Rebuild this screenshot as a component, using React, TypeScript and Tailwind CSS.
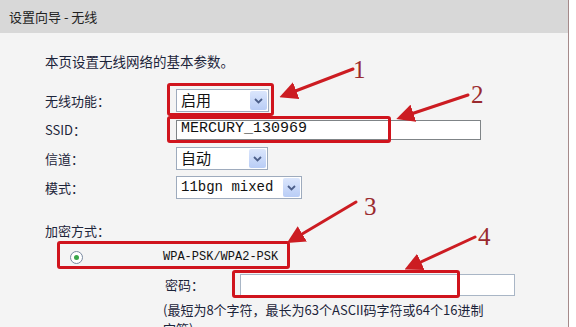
import React from "react";

const cjk = { fontFamily: '"Noto Sans CJK SC", "Liberation Sans", sans-serif' };
const mono = { fontFamily: '"Liberation Mono", "DejaVu Sans Mono", monospace' };

function Select({ value, width, isMono }: { value: string; width: string; isMono?: boolean }) {
  return (
    <div className={`flex h-[23px] ${width} items-stretch border border-[#9eabbd] bg-white`}>
      <span
        className={`flex flex-1 items-center pl-[4px] text-[#111] ${isMono ? "text-[14px]" : "text-[15px]"}`}
        style={isMono ? mono : cjk}
      >
        {value}
      </span>
      <span className="m-[1px] flex w-[17px] items-center justify-center rounded-[2px] bg-gradient-to-b from-[#dbe6fc] to-[#b9cdf6]">
        <svg width="9" height="6" viewBox="0 0 9 6">
          <path d="M1 1 L4.5 4.5 L8 1" fill="none" stroke="#4c5f8a" strokeWidth="1.8" />
        </svg>
      </span>
    </div>
  );
}

function Row({ label, children }: { label: string; children: React.ReactNode }) {
  return (
    <div className="flex h-[29px] items-center">
      <span className="w-[131px] text-[13px] text-[#1c243a]">{label}</span>
      {children}
    </div>
  );
}

export default function App() {
  const arrows = [
    { x1: 353, y1: 69, x2: 285, y2: 95 },
    { x1: 468, y1: 95, x2: 402, y2: 117 },
    { x1: 356, y1: 202, x2: 292, y2: 240 },
    { x1: 475, y1: 237, x2: 410, y2: 267 },
  ];
  return (
    <div className="relative h-[327px] w-[576px] overflow-hidden bg-white" style={cjk}>
      <div className="h-[327px] w-[569px] border-r border-[#a58a8a] bg-[#f4f4f4]">
        {/* header */}
        <div className="flex h-[33px] items-center bg-[#d8d8d8] pl-[9px] text-[13px] text-[#222]">
          设置向导 - 无线
        </div>

        <div className="pl-[45px]">
          <p className="mt-[18px] h-[20px] text-[13.5px] leading-[20px] text-[#1c243a]">本页设置无线网络的基本参数。</p>

          <div className="mt-[15px]">
            <Row label="无线功能：">
              <Select value="启用" width="w-[93px]" />
            </Row>
            <Row label="SSID：">
              <div className="flex h-[20px] w-[305px] items-center border border-[#7f8487] bg-white pl-[4px] text-[15px] text-[#111]" style={mono}>
                MERCURY_130969
              </div>
            </Row>
            <Row label="信道：">
              <Select value="自动" width="w-[92px]" />
            </Row>
            <Row label="模式：">
              <Select value="11bgn mixed" width="w-[126px]" isMono />
            </Row>
          </div>

          <p className="mt-[19px] h-[20px] text-[13px] leading-[20px] text-[#1c243a]">加密方式：</p>
        </div>

        {/* radio row */}
        <div className="mt-[3px] flex h-[26px] items-center pl-[70px]">
          <span className="flex h-[13px] w-[13px] items-center justify-center rounded-full border border-[#7a8aa0] bg-white">
            <span className="h-[5px] w-[5px] rounded-full bg-[#3aa64a]" />
          </span>
          <span className="ml-[80px] text-[12px] text-[#111]" style={mono}>
            WPA-PSK/WPA2-PSK
          </span>
        </div>

        {/* password */}
        <div className="mt-[4px] flex h-[22px] items-center pl-[165px]">
          <span className="w-[75px] text-[13px] text-[#1c243a]">密码：</span>
          <div className="h-[22px] w-[275px] border border-[#a9b6c6] bg-white" />
        </div>

        <div className="mt-[4px] pl-[163px] text-[13px] leading-[19px] text-[#1c243a]">
          <p>(最短为8个字符，最长为63个ASCII码字符或64个16进制</p>
          <p>字符)</p>
        </div>
      </div>

      {/* red highlight boxes */}
      <div className="absolute left-[167px] top-[83px] h-[33px] w-[107px] rounded-[3px] border-[3px] border-[#d0141d]" />
      <div className="absolute left-[167px] top-[116px] h-[27px] w-[224px] rounded-[3px] border-[3px] border-[#d0141d]" />
      <div className="absolute left-[57px] top-[241px] h-[28px] w-[233px] rounded-[3px] border-[3px] border-[#d0141d]" />
      <div className="absolute left-[232px] top-[270px] h-[28px] w-[228px] rounded-[3px] border-[3px] border-[#d0141d]" />

      {/* arrows and numbers */}
      <svg className="pointer-events-none absolute left-0 top-0" width="576" height="327">
        <defs>
          <marker id="head" markerWidth="6" markerHeight="6" refX="4" refY="3" orient="auto" markerUnits="strokeWidth">
            <path d="M0 0 L6 3 L0 6 Z" fill="#cc1c22" />
          </marker>
        </defs>
        {arrows.map((a, i) => (
          <line key={i} x1={a.x1} y1={a.y1} x2={a.x2} y2={a.y2} stroke="#cc1c22" strokeWidth="3" strokeLinecap="round" markerEnd="url(#head)" />
        ))}
        <g fill="#9a2a2e" fontFamily='"Liberation Serif", serif' fontSize="25">
          <text x="353" y="78">1</text>
          <text x="471" y="103">2</text>
          <text x="364" y="215">3</text>
          <text x="478" y="245">4</text>
        </g>
      </svg>
    </div>
  );
}
